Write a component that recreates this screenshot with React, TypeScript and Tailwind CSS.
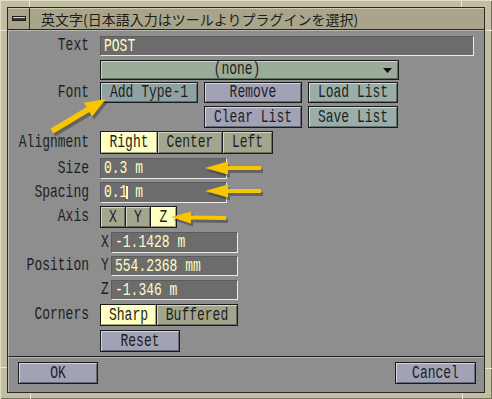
import type { ReactNode } from "react"

const MONO = "font-['Liberation_Mono',monospace] text-[13px]"
const BEVEL = "shadow-[inset_1px_1px_0_rgba(255,255,255,0.55),inset_-1px_-1px_0_rgba(0,0,0,0.35)]"

function Glyphs({ children }: { children: ReactNode }) {
  return (
    <span className="inline-block scale-y-[1.4] whitespace-pre leading-[13px]">
      {children}
    </span>
  )
}

function Label({ text }: { text: string }) {
  return (
    <div className={`w-[81px] shrink-0 pr-[1px] text-right text-[#1e1e1e] ${MONO}`}>
      <Glyphs>{text}</Glyphs>
    </div>
  )
}

const tones = {
  lavender: "bg-[#a2a2b6]",
  teal: "bg-[#8fa2a3]",
  sage: "bg-[#9aaea9]",
}

function Btn({
  label,
  tone,
  className = "",
}: {
  label: string
  tone: keyof typeof tones
  className?: string
}) {
  return (
    <div
      className={`flex items-center justify-center border border-[#1b1b1b] text-[#1e1e1e] ${tones[tone]} ${BEVEL} ${MONO} ${className}`}
    >
      <Glyphs>{label}</Glyphs>
    </div>
  )
}

function Toggles({ items }: { items: { label: string; w: string; on?: boolean }[] }) {
  return (
    <div className="flex h-full border border-[#1b1b1b]">
      {items.map((it, i) => (
        <div
          key={it.label}
          className={`flex items-center justify-center text-[#1e1e1e] ${it.w} ${BEVEL} ${MONO} ${
            it.on ? "bg-[#ffffc2]" : "bg-[#a3a68f]"
          } ${i < items.length - 1 ? "border-r border-[#1b1b1b]" : ""}`}
        >
          <Glyphs>{it.label}</Glyphs>
        </div>
      ))}
    </div>
  )
}

function Field({
  value,
  className = "",
  children,
}: {
  value: string
  className?: string
  children?: ReactNode
}) {
  return (
    <div
      className={`relative flex h-full items-center border-t border-l border-t-[#5c5c5c] border-l-[#5c5c5c] border-r border-b border-r-[#ececec] border-b-[#ececec] bg-[#6c6c6c] pl-[3px] text-[#ffffc4] ${MONO} ${className}`}
    >
      <Glyphs>{value}</Glyphs>
      {children}
    </div>
  )
}

function arrow(
  tail: [number, number],
  tip: [number, number],
  head: number,
  hw: number,
  sw: number
) {
  const dx = tip[0] - tail[0]
  const dy = tip[1] - tail[1]
  const len = Math.hypot(dx, dy)
  const ux = dx / len
  const uy = dy / len
  const nx = -uy
  const ny = ux
  const bx = tip[0] - ux * head
  const by = tip[1] - uy * head
  const pts = [
    [tail[0] + nx * sw, tail[1] + ny * sw],
    [bx + nx * sw, by + ny * sw],
    [bx + nx * hw, by + ny * hw],
    tip,
    [bx - nx * hw, by - ny * hw],
    [bx - nx * sw, by - ny * sw],
    [tail[0] - nx * sw, tail[1] - ny * sw],
  ]
  return pts.map((p) => `${p[0].toFixed(1)},${p[1].toFixed(1)}`).join(" ")
}

const arrows = [
  arrow([52, 131], [106, 99], 21, 8, 2.8),
  arrow([261, 168], [205, 168], 23, 6.5, 2),
  arrow([261, 191], [205, 191], 23, 6.5, 2),
  arrow([226, 218], [171, 217], 20, 6, 2),
]

// little corner notches of the window frame
const notches = [
  "top-0 left-[29px] h-[7px] w-[1px]",
  "top-0 left-[461px] h-[7px] w-[1px]",
  "bottom-0 left-[30px] h-[6px] w-[1px]",
  "bottom-0 left-[462px] h-[6px] w-[1px]",
  "top-[30px] left-0 h-[1px] w-[7px]",
  "top-[367px] left-0 h-[1px] w-[7px]",
  "top-[30px] right-0 h-[1px] w-[7px]",
  "top-[368px] right-0 h-[1px] w-[7px]",
]

export default function App() {
  return (
    <div className="relative h-[399px] w-[492px] overflow-hidden bg-[#c2bea3] pt-[7px] pl-[7px] shadow-[inset_1px_1px_0_#e2dec6,inset_-1px_-1px_0_#77735e]">
      <div className="flex h-[386px] w-[478px] flex-col border border-[#2a2a22] bg-[#8e8e8e]">
        {/* title bar */}
        <div className="flex h-[22px] shrink-0 items-center border-b border-[#2a2a22] bg-[#a9a58b] shadow-[inset_0_1px_0_#cfcbb0]">
          <div className="flex h-full w-[22px] items-center justify-center border-r border-[#2a2a22]">
            <div className="h-[5px] w-[14px] border border-[#1a1a1a] bg-[#3a3a30] shadow-[inset_0_1px_0_#d8d4bc]" />
          </div>
          <span className="ml-[11px] font-['Noto_Sans_CJK_JP',sans-serif] text-[14px] leading-none text-[#1c1c18]">
            英文字(日本語入力はツールよりプラグインを選択)
          </span>
        </div>

        {/* main panel */}
        <div className="flex h-[327px] shrink-0 flex-col border-t border-l border-[#b4b4b4] border-b-[#222] border-b">
          <div className="mt-[5px] flex h-[20px] items-center">
            <Label text="Text" />
            <Field value="POST" className="ml-[10px] w-[374px]" />
          </div>

          <div className="mt-[4px] ml-[91px] flex h-[20px] w-[299px] items-center border border-[#1b1b1b] bg-[#9bac98] shadow-[inset_1px_1px_0_#c8d6c4,inset_-1px_-1px_0_#5f6e5e]">
            <div className={`flex-1 pr-[10px] text-center text-[#1e1e1e] ${MONO}`}>
              <Glyphs>(none)</Glyphs>
            </div>
            <svg width="9" height="5" viewBox="0 0 9 5" className="mr-[6px]">
              <polygon points="0,0 9,0 4.5,5" fill="#111" />
            </svg>
          </div>

          <div className="mt-[2px] flex h-[21px] items-center">
            <Label text="Font" />
            <Btn label="Add Type-1" tone="teal" className="ml-[10px] h-full w-[98px]" />
            <Btn label="Remove" tone="lavender" className="ml-[6px] h-full w-[98px]" />
            <Btn label="Load List" tone="sage" className="ml-[6px] h-full w-[90px]" />
          </div>

          <div className="mt-[3px] flex h-[22px] items-center pl-[195px]">
            <Btn label="Clear List" tone="lavender" className="h-full w-[98px]" />
            <Btn label="Save List" tone="sage" className="ml-[6px] h-full w-[90px]" />
          </div>

          <div className="mt-[3px] flex h-[23px] items-center">
            <Label text="Alignment" />
            <div className="ml-[10px] h-full">
              <Toggles
                items={[
                  { label: "Right", w: "w-[57px]", on: true },
                  { label: "Center", w: "w-[65px]" },
                  { label: "Left", w: "w-[49px]" },
                ]}
              />
            </div>
          </div>

          <div className="mt-[4px] flex h-[21px] items-center">
            <Label text="Size" />
            <Field value="0.3 m" className="ml-[10px] w-[127px]" />
          </div>

          <div className="mt-[3px] flex h-[21px] items-center">
            <Label text="Spacing" />
            <Field value="0.1 m" className="ml-[10px] w-[127px]">
              <span className="absolute top-[3px] left-[25px] h-[13px] w-[2px] bg-[#ffffc4]" />
            </Field>
          </div>

          <div className="mt-[3px] flex h-[22px] items-center">
            <Label text="Axis" />
            <div className="ml-[10px] h-full">
              <Toggles
                items={[
                  { label: "X", w: "w-[25px]" },
                  { label: "Y", w: "w-[25px]" },
                  { label: "Z", w: "w-[25px]", on: true },
                ]}
              />
            </div>
          </div>

          <div className="mt-[4px] flex h-[21px] items-center">
            <Label text="" />
            <div className={`ml-[10px] w-[11px] pl-[1px] text-[#1e1e1e] ${MONO}`}>
              <Glyphs>X</Glyphs>
            </div>
            <Field value="-1.1428 m" className="w-[127px]" />
          </div>

          <div className="mt-[3px] flex h-[20px] items-center">
            <Label text="Position" />
            <div className={`ml-[10px] w-[11px] pl-[1px] text-[#1e1e1e] ${MONO}`}>
              <Glyphs>Y</Glyphs>
            </div>
            <Field value="554.2368 mm" className="w-[127px]" />
          </div>

          <div className="mt-[4px] flex h-[20px] items-center">
            <Label text="" />
            <div className={`ml-[10px] w-[11px] pl-[1px] text-[#1e1e1e] ${MONO}`}>
              <Glyphs>Z</Glyphs>
            </div>
            <Field value="-1.346 m" className="w-[127px]" />
          </div>

          <div className="mt-[4px] flex h-[22px] items-center">
            <Label text="Corners" />
            <div className="ml-[10px] h-full">
              <Toggles
                items={[
                  { label: "Sharp", w: "w-[56px]", on: true },
                  { label: "Buffered", w: "w-[80px]" },
                ]}
              />
            </div>
          </div>

          <div className="mt-[4px] flex h-[22px] items-center">
            <Label text="" />
            <Btn label="Reset" tone="lavender" className="ml-[10px] h-full w-[80px]" />
          </div>
        </div>

        {/* bottom buttons */}
        <div className="flex flex-1 items-start justify-between border-t border-l border-[#b4b4b4] pr-[8px] pl-[9px] pt-[4px]">
          <Btn label="OK" tone="lavender" className="h-[22px] w-[80px]" />
          <Btn label="Cancel" tone="lavender" className="h-[22px] w-[81px]" />
        </div>
      </div>

      {notches.map((n) => (
        <span key={n} className={`absolute bg-[#ece8d2] ${n}`} />
      ))}

      <svg
        className="pointer-events-none absolute top-0 left-0"
        width="492"
        height="399"
        viewBox="0 0 492 399"
      >
        {arrows.map((p, i) => (
          <polygon key={`s${i}`} points={p} fill="#2e2e2e" opacity="0.45" transform="translate(2,3)" />
        ))}
        {arrows.map((p, i) => (
          <polygon key={`a${i}`} points={p} fill="#f7c600" />
        ))}
      </svg>
    </div>
  )
}
